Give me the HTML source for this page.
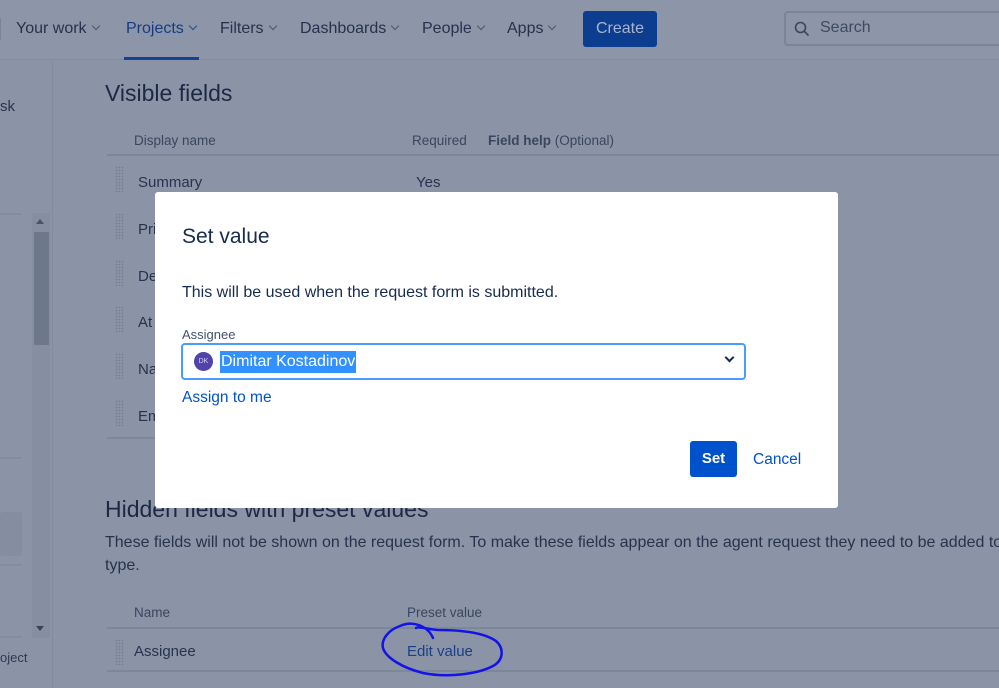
<!DOCTYPE html>
<html><head><meta charset="utf-8"><style>
*{margin:0;padding:0;box-sizing:border-box}
body{width:999px;height:688px;overflow:hidden;background:#8a94a6;font-family:"Liberation Sans",sans-serif;position:relative;color:#1f2a45}
.a{position:absolute;white-space:nowrap}
.nav{font-size:16px;color:#26324d;top:20px}
.car{display:inline-block;width:6px;height:6px;border-right:1.5px solid #4a5670;border-bottom:1.5px solid #4a5670;transform:rotate(45deg);margin-left:6px;position:relative;top:-4px}
.grip{position:absolute;left:115px;width:9px;height:26px;background-image:radial-gradient(circle,#737e92 0.7px,transparent 0.9px);background-size:3px 3px}
.row{font-size:15px;color:#27334e;left:138px}
.line{position:absolute;height:2px;background:#7d879a}
.lbl{font-size:13.5px;color:#3a4660}
</style></head><body>
<div class="a" style="left:0;top:0;width:999px;height:60px;background:#8c96a8;border-bottom:1px solid #828c9e"></div>
<div class="a" style="left:0;top:18px;width:1px;height:22px;background:#7a8496"></div>
<div class="a nav" style="left:16px">Your work<span class="car"></span></div>
<div class="a nav" style="left:126px;color:#173a82">Projects<span class="car" style="border-color:#2a4a8a"></span></div>
<div class="a" style="left:124px;top:57px;width:75px;height:3px;background:#173f96"></div>
<div class="a nav" style="left:220px">Filters<span class="car"></span></div>
<div class="a nav" style="left:300px">Dashboards<span class="car"></span></div>
<div class="a nav" style="left:422px">People<span class="car"></span></div>
<div class="a nav" style="left:507px">Apps<span class="car"></span></div>
<div class="a" style="left:583px;top:11px;width:74px;height:36px;background:#0c3d8f;border-radius:3px;color:#a9b5cc;font-size:16px;text-align:center;line-height:36px">Create</div>
<div class="a" style="left:784px;top:11px;width:230px;height:35px;border:2px solid #7b8598;border-radius:4px"></div>
<svg class="a" style="left:794px;top:21px" width="16" height="16" viewBox="0 0 16 16"><circle cx="6.5" cy="6.5" r="5" fill="none" stroke="#3a4660" stroke-width="1.6"/><path d="M10 10l4.5 4.5" stroke="#3a4660" stroke-width="1.6"/></svg>
<div class="a" style="left:820px;top:19px;font-size:16px;color:#3e4a63">Search</div>
<div class="a" style="left:52px;top:61px;width:1px;height:627px;background:#828c9e"></div>
<div class="a" style="left:0;top:98px;font-size:15px;color:#27334e">sk</div>
<div class="a" style="left:0;top:213px;width:22px;height:2px;background:#838d9f"></div>
<div class="a" style="left:32px;top:213px;width:18px;height:425px;background:#858fa1"></div>
<div class="a" style="left:34px;top:232px;width:15px;height:113px;background:#6e788b"></div>
<div class="a" style="left:36px;top:219px;width:0;height:0;border-left:4px solid transparent;border-right:4px solid transparent;border-bottom:5px solid #4a5468"></div>
<div class="a" style="left:36px;top:626px;width:0;height:0;border-left:4px solid transparent;border-right:4px solid transparent;border-top:5px solid #3a4458"></div>
<div class="a" style="left:0;top:457px;width:22px;height:2px;background:#838d9f"></div>
<div class="a" style="left:0;top:512px;width:22px;height:44px;background:#848ea0;border-radius:3px"></div>
<div class="a" style="left:0;top:564px;width:22px;height:2px;background:#838d9f"></div>
<div class="a" style="left:0;top:636px;width:22px;height:2px;background:#838d9f"></div>
<div class="a" style="left:0;top:650px;font-size:13px;color:#2e3a55">oject</div>
<div class="a" style="left:105px;top:80px;font-size:23px;color:#1c2844">Visible fields</div>
<div class="a lbl" style="left:134px;top:133px">Display name</div>
<div class="a lbl" style="left:412px;top:133px">Required</div>
<div class="a lbl" style="left:488px;top:133px"><b>Field help</b> (Optional)</div>
<div class="line" style="left:107px;top:154px;width:892px"></div>
<div class="grip" style="top:166px"></div><div class="a row" style="top:174px">Summary</div><div class="a row" style="left:416px;top:174px">Yes</div>
<div class="grip" style="top:213px"></div><div class="a row" style="top:221px">Pri</div>
<div class="grip" style="top:260px"></div><div class="a row" style="top:268px">De</div>
<div class="grip" style="top:306px"></div><div class="a row" style="top:314px">At</div>
<div class="grip" style="top:353px"></div><div class="a row" style="top:361px">Na</div>
<div class="grip" style="top:400px"></div><div class="a row" style="top:408px">Em</div>
<div class="line" style="left:107px;top:437px;width:60px"></div>
<div class="a" style="left:105px;top:496px;font-size:23px;color:#1c2844">Hidden fields with preset values</div>
<div class="a" style="left:105px;top:534px;font-size:16px;color:#27334e">These fields will not be shown on the request form. To make these fields appear on the agent request they need to be added to</div>
<div class="a" style="left:105px;top:557px;font-size:16px;color:#27334e">type.</div>
<div class="a lbl" style="left:134px;top:605px">Name</div>
<div class="a lbl" style="left:407px;top:605px">Preset value</div>
<div class="line" style="left:107px;top:627px;width:892px"></div>
<div class="grip" style="top:639px"></div><div class="a row" style="left:134px;top:643px">Assignee</div>
<div class="a" style="left:407px;top:643px;font-size:15px;color:#1b3f86">Edit value</div>
<div class="line" style="left:107px;top:670px;width:892px"></div>
<svg class="a" style="left:378px;top:616px" width="130" height="64" viewBox="0 0 130 64"><path d="M55 22 C50 10 35 4 22 10 C10 14 3 24 5 32 C8 42 25 52 45 57 C70 62 100 58 115 50 C126 44 126 32 118 25 C105 16 80 14 60 14 C48 13 40 10 38 12" fill="none" stroke="#1313e6" stroke-width="2.5" stroke-linecap="round"/></svg>
<div class="a" style="left:155px;top:192px;width:683px;height:316px;background:#fff;border-radius:3px"></div>
<div class="a" style="left:182px;top:225px;font-size:21px;color:#172b4d">Set value</div>
<div class="a" style="left:182px;top:284px;font-size:16px;color:#172b4d">This will be used when the request form is submitted.</div>
<div class="a" style="left:182px;top:327px;font-size:13px;color:#42526e">Assignee</div>
<div class="a" style="left:181px;top:343px;width:565px;height:37px;border:2px solid #4c9aff;border-radius:4px"></div>
<div class="a" style="left:194px;top:352px;width:19px;height:19px;border-radius:50%;background:#5243aa;color:#d8d4ee;font-size:7px;text-align:center;line-height:19px">DK</div>
<div class="a" style="left:220px;top:351px;height:22px;background:#3390ff;color:#fff;font-size:16px;line-height:22px;padding:0 1px">Dimitar Kostadinov</div>
<div class="a" style="left:726px;top:354px;width:7px;height:7px;border-right:2px solid #172b4d;border-bottom:2px solid #172b4d;transform:rotate(45deg)"></div>
<div class="a" style="left:182px;top:389px;font-size:15.5px;color:#0052cc">Assign to me</div>
<div class="a" style="left:690px;top:441px;width:47px;height:36px;background:#0052cc;border-radius:3px;color:#fff;font-weight:bold;font-size:15px;text-align:center;line-height:36px">Set</div>
<div class="a" style="left:753px;top:451px;font-size:15.5px;color:#0052cc">Cancel</div>
</body></html>
